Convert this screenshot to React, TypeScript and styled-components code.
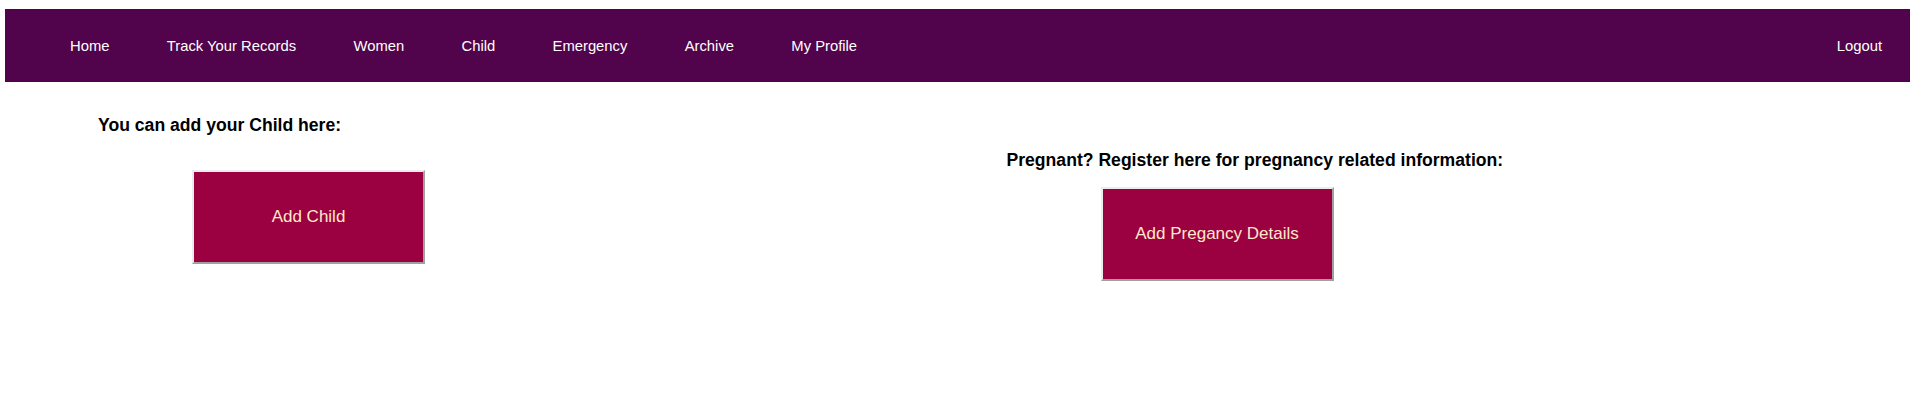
import React from "react";
import styled, { createGlobalStyle } from "styled-components";

const Global = createGlobalStyle`
  html, body { margin: 0; padding: 0; background: #ffffff; }
  body { font-family: "Liberation Sans", Arial, sans-serif; }
`;

const NavBar = styled.nav`
  margin: 9px 7px 0 5px;
  height: 73px;
  background: #51034b;
  display: flex;
  align-items: center;
  padding: 0 28px 0 65px;
  box-sizing: border-box;
`;

const NavList = styled.div`
  display: flex;
  align-items: center;
  gap: 57.3px;
`;

const NavLink = styled.a<{ $end?: boolean }>`
  color: #ffffff;
  font-size: 14.8px;
  text-decoration: none;
  white-space: nowrap;
  margin-left: ${(p) => (p.$end ? "auto" : "0")};
`;

const Main = styled.main`
  display: grid;
  grid-template-columns: 908.5px auto;
  padding-left: 98px;
`;

const Section = styled.section<{ $top: number; $gap: number }>`
  padding-top: ${(p) => p.$top}px;
  display: flex;
  flex-direction: column;
  align-items: flex-start;
  gap: ${(p) => p.$gap}px;
`;

const Heading = styled.h3`
  margin: 0;
  font-size: 17.6px;
  line-height: 20px;
  font-weight: bold;
  color: #000000;
  white-space: nowrap;
`;

const ActionButton = styled.button`
  margin-left: 94px;
  width: 233px;
  height: 94px;
  background: #9b0040;
  color: #ffe9c9;
  font-family: "Liberation Sans", Arial, sans-serif;
  font-size: 17px;
  border-style: solid;
  border-width: 2px;
  border-color: #ececec #a0a0a0 #a0a0a0 #ececec;
  cursor: pointer;
  padding: 0;
`;

export default function App() {
  const links = ["Home", "Track Your Records", "Women", "Child", "Emergency", "Archive", "My Profile"];
  return (
    <>
      <Global />
      <NavBar>
        <NavList>
          {links.map((l) => (
            <NavLink key={l} href="#">
              {l}
            </NavLink>
          ))}
        </NavList>
        <NavLink $end href="#">
          Logout
        </NavLink>
      </NavBar>
      <Main>
        <Section $top={33} $gap={35}>
          <Heading>You can add your Child here:</Heading>
          <ActionButton>Add Child</ActionButton>
        </Section>
        <Section $top={68} $gap={16.5}>
          <Heading>Pregnant? Register here for pregnancy related information:</Heading>
          <ActionButton>Add Pregancy Details</ActionButton>
        </Section>
      </Main>
    </>
  );
}
